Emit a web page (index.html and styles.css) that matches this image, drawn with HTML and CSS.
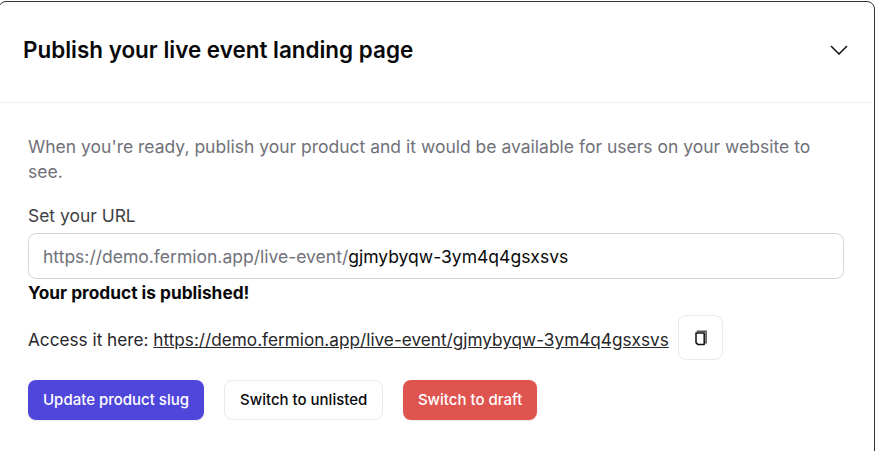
FILE: index.html
```html
<!DOCTYPE html>
<html lang="en">
<head>
  <meta charset="UTF-8">
  <meta name="viewport" content="width=device-width, initial-scale=1.0">
  <title>Publish your live event landing page</title>
  <link rel="stylesheet" href="styles.css">
</head>
<body>
  <section class="card">
    <div class="card-header">
      <h2>Publish your live event landing page</h2>
      <svg class="chevron" width="18" height="10" viewBox="0 0 18 10" fill="none" stroke="#111" stroke-width="1.5">
        <path d="M1 1l8 8 8-8"/>
      </svg>
    </div>

    <div class="card-body">
      <p class="intro">When you're ready, publish your product and it would be available for users on your website to see.</p>

      <label class="field-label">Set your URL</label>
      <div class="url-input">
        <span class="url-prefix">https://demo.fermion.app/live-event/</span><span class="url-slug">gjmybyqw-3ym4q4gsxsvs</span>
      </div>

      <p class="published">Your product is published!</p>

      <div class="access-row">
        <span class="access-text">Access it here: <a href="#">https://demo.fermion.app/live-event/gjmybyqw-3ym4q4gsxsvs</a></span>
        <button class="copy-btn" aria-label="Copy link">
          <svg width="14" height="16" viewBox="0 0 14 16" fill="none">
            <path d="M3.5 2.2V1.2h8.6v11.6h-1.4" stroke="#555" stroke-width="1.6"/>
            <path d="M2 3h8.2v11.6H4L2 12.6z" stroke="#111" stroke-width="1.5" stroke-linejoin="round"/>
          </svg>
        </button>
      </div>

      <div class="actions">
        <button class="btn btn-primary">Update product slug</button>
        <button class="btn btn-white">Switch to unlisted</button>
        <button class="btn btn-danger">Switch to draft</button>
      </div>
    </div>
  </section>
</body>
</html>
```

FILE: styles.css
```css
body {
  font-family: 'Inter', sans-serif;
  margin: 0;
  padding: 0;
  background-color: white;
  overflow: hidden;
}
.card {
  margin: 1px 2px 0 -2px;
  height: 470px;
  background: white;
  border: 1px solid #333;
  border-radius: 8px;
}
.card-header {
  display: flex;
  justify-content: space-between;
  align-items: center;
  height: 100px;
  padding: 0 26px 0 24px;
  border-bottom: 1px solid #f1f1f3;
}
.card-header h2 {
  margin: 0 0 6px;
  font-size: 22.45px;
  font-weight: 600;
  color: #09090b;
}
.chevron {
  margin-bottom: 4px;
}
.card-body {
  padding: 31px 30px 0 29px;
}
.intro {
  margin: 0;
  font-size: 17.5px;
  line-height: 25px;
  color: #71717a;
}
.field-label {
  display: block;
  margin-top: 19px;
  font-size: 17.45px;
  font-weight: 400;
  line-height: 26px;
  color: #3f3f46;
}
.url-input {
  margin-top: 4px;
  height: 46px;
  box-sizing: border-box;
  display: flex;
  align-items: center;
  padding: 0 14px;
  border: 1px solid #d4d4d8;
  border-radius: 8px;
  font-size: 17.52px;
}
.url-prefix {
  color: #71717a;
}
.url-slug {
  color: #09090b;
}
.published {
  margin: 1px 0 0;
  font-size: 17.3px;
  font-weight: 700;
  line-height: 26px;
  color: #09090b;
}
.access-row {
  display: flex;
  align-items: center;
  gap: 9.5px;
  margin-top: 9px;
  font-size: 17.2px;
  color: #27272a;
}
.access-text {
  padding-top: 4px;
}
.access-row a {
  color: #27272a;
}
.copy-btn {
  display: flex;
  align-items: center;
  justify-content: center;
  width: 45px;
  height: 45px;
  padding: 0;
  background: white;
  border: 1px solid #e8eaf2;
  border-radius: 8px;
}
.actions {
  display: flex;
  gap: 20px;
  margin-top: 20px;
}
.btn {
  height: 40px;
  padding: 0 15px 1px;
  border: none;
  border-radius: 8px;
  font-family: inherit;
  font-size: 15px;
  font-weight: 500;
  box-shadow: 0 1px 2px rgba(0,0,0,0.08);
}
.btn-primary {
  background-color: #4f46dc;
  color: white;
}
.btn-white {
  background-color: white;
  color: #09090b;
  border: 1px solid #e8e8f0;
  box-shadow: none;
}
.btn-danger {
  padding: 0 14.6px 1px;
  background-color: #e05450;
  color: white;
}
```
